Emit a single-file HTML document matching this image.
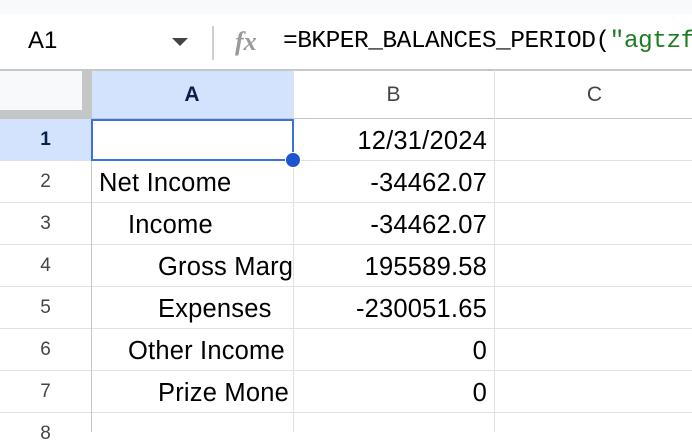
<!DOCTYPE html>
<html><head><style>
*{margin:0;padding:0;box-sizing:border-box}
body{width:692px;height:432px;overflow:hidden;background:#fff;font-family:"Liberation Sans",Arial,sans-serif;position:relative}
.a{position:absolute}
.hl{position:absolute;left:0;width:692px;height:1px;background:#e1e1e1}
.vl{position:absolute;top:70px;height:362px;width:1px;background:#e1e1e1}
.rn{position:absolute;left:0;width:91px;text-align:center;font-size:19px;color:#444}
.t{position:absolute;font-size:25.5px;color:#000;white-space:nowrap;letter-spacing:0.2px}
.r{position:absolute;right:205px;font-size:25.5px;color:#000;letter-spacing:0.2px}
</style></head><body>
<div class="a" style="left:0;top:0;width:692px;height:14px;background:#f8f9fb"></div>
<div class="a" style="left:28px;top:27px;font-size:24px">A1</div>
<div class="a" style="left:172px;top:38px;width:0;height:0;border-left:8px solid transparent;border-right:8px solid transparent;border-top:8px solid #444"></div>
<div class="a" style="left:212px;top:26px;width:2px;height:34px;background:#d0d0d0"></div>
<div class="a" style="left:235px;top:27px;font-size:26px;font-style:italic;font-family:'Liberation Serif',serif;color:#9a9a9a;font-weight:bold">fx</div>
<div class="a" style="left:283px;top:28px;font-size:24.5px;font-family:'Liberation Mono',monospace;white-space:nowrap;letter-spacing:-0.5px">=BKPER_BALANCES_PERIOD(<span style="color:#1e7d22">"agtzf</span></div>
<div class="a" style="left:0;top:69px;width:692px;height:2px;background:#c7c7c7"></div>
<div class="a" style="left:0;top:71px;width:91px;height:48px;background:#c4c7c5"></div>
<div class="a" style="left:0;top:71px;width:82px;height:39px;background:#f8f9fa"></div>
<div class="a" style="left:91px;top:71px;width:202px;height:48px;background:#d3e3fd"></div>
<div class="a" style="left:91px;top:83px;width:202px;text-align:center;font-size:21px;font-weight:bold;color:#0b1f49">A</div>
<div class="a" style="left:293px;top:83px;width:201px;text-align:center;font-size:21px;color:#444">B</div>
<div class="a" style="left:494px;top:83px;width:201px;text-align:center;font-size:21px;color:#444">C</div>
<div class="a" style="left:0;top:119px;width:91px;height:41px;background:#d3e3fd"></div>
<div class="hl" style="top:118px;background:#c4c7c5"></div>
<div class="hl" style="top:160px"></div><div class="hl" style="top:202px"></div><div class="hl" style="top:244px"></div><div class="hl" style="top:286px"></div><div class="hl" style="top:328px"></div><div class="hl" style="top:370px"></div><div class="hl" style="top:412px"></div>
<div class="vl" style="left:91px;background:#c4c7c5"></div><div class="vl" style="left:293px"></div><div class="vl" style="left:494px"></div>
<div class="rn" style="top:129px;font-weight:bold;color:#0b1f49">1</div>
<div class="rn" style="top:171px">2</div><div class="rn" style="top:213px">3</div><div class="rn" style="top:255px">4</div><div class="rn" style="top:297px">5</div><div class="rn" style="top:339px">6</div><div class="rn" style="top:381px">7</div><div class="rn" style="top:423px">8</div>
<div class="r" style="top:127px">12/31/2024</div>
<div class="t" style="left:99px;top:169px">Net Income</div><div class="r" style="top:169px">-34462.07</div>
<div class="t" style="left:128px;top:211px">Income</div><div class="r" style="top:211px">-34462.07</div>
<div class="a" style="left:92px;top:244px;width:200px;height:42px;overflow:hidden"><div class="t" style="left:66px;top:9px">Gross Margin</div></div><div class="r" style="top:253px">195589.58</div>
<div class="t" style="left:158px;top:295px">Expenses</div><div class="r" style="top:295px">-230051.65</div>
<div class="t" style="left:128px;top:337px">Other Income</div><div class="r" style="top:337px">0</div>
<div class="a" style="left:92px;top:370px;width:199px;height:42px;overflow:hidden"><div class="t" style="left:66px;top:9px">Prize Mone</div></div><div class="r" style="top:379px">0</div>
<div class="a" style="left:91px;top:119px;width:203px;height:42px;border:2px solid #3b71dd"></div>
<div class="a" style="left:285px;top:152px;width:16px;height:16px;border-radius:50%;background:#1d55d0;border:1px solid #fff"></div>
</body></html>
